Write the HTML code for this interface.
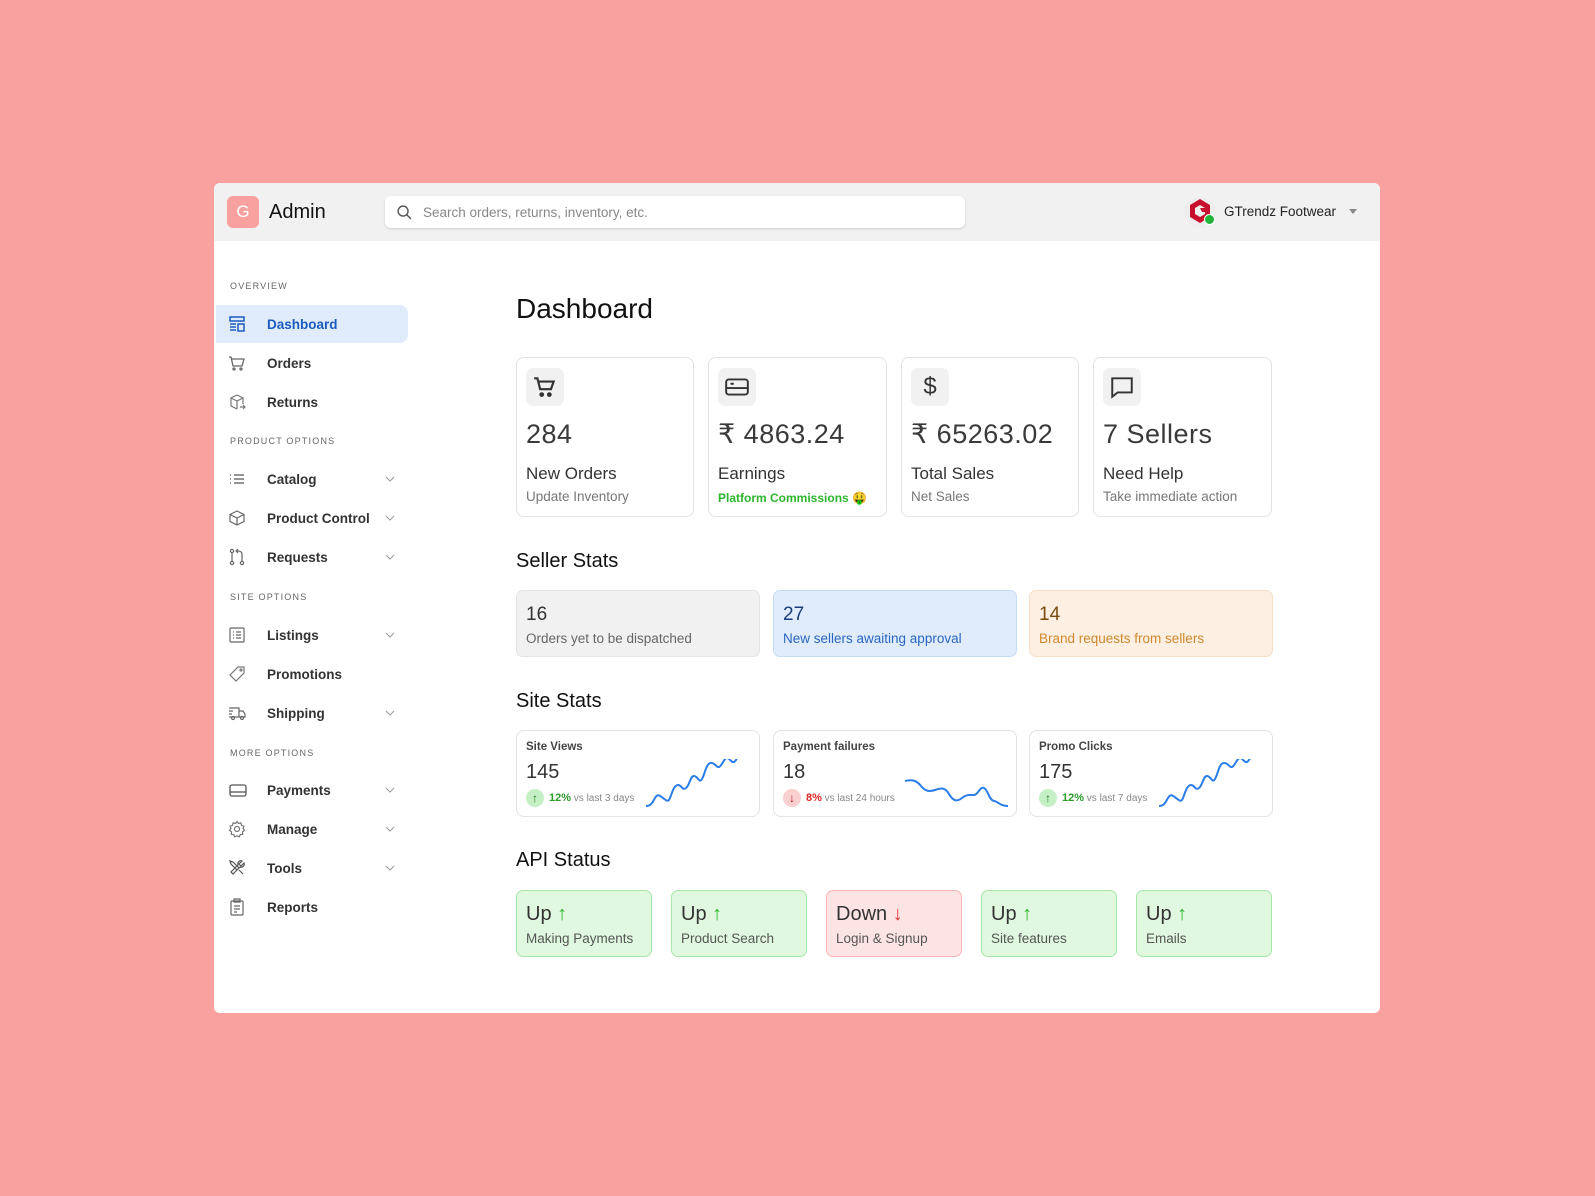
<!DOCTYPE html>
<html><head><meta charset="utf-8">
<style>
*{box-sizing:border-box;margin:0;padding:0}
body{width:1595px;height:1196px;background:#f9a19e;font-family:"Liberation Sans",sans-serif;position:relative;overflow:hidden;color:#333}
.a{position:absolute}
#win{left:214px;top:183px;width:1166px;height:830px;background:#fff;border-radius:6px;overflow:hidden}
#hdr{left:0;top:0;width:1166px;height:58px;background:#f1f1f1}
.lbl{font-size:9px;letter-spacing:1.2px;color:#666;left:16px}
.it{left:2px;width:190px;height:38px;display:flex;align-items:center;font-size:13.5px;font-weight:bold;color:#333}
.it svg{position:absolute;left:12px;width:18px;height:18px}
.it span{position:absolute;left:51px}
.it .ch{position:absolute;left:168px;width:12px;height:12px}
.card{border:1px solid #e3e3e3;border-radius:8px;background:#fff}
.ib{left:9px;top:10px;width:38px;height:38px;border-radius:7px;background:#f1f1f1;display:flex;align-items:center;justify-content:center}
.num{left:9px;top:61px;font-size:27px;color:#3a3a3a;letter-spacing:.5px}
.t1{left:9px;top:106px;font-size:17px;color:#333}
.t2{left:9px;top:131px;font-size:13.5px;color:#777}
h2{position:absolute;font-size:20px;font-weight:normal;color:#111}
.sb{border-radius:7px;height:67px;width:244px;top:407px}
.sb .n{position:absolute;left:9px;top:13px;font-size:19px}
.sb .d{position:absolute;left:9px;top:40px;font-size:13.5px}
.ss{top:547px;width:244px;height:87px}
.ss .h{position:absolute;left:9px;top:10px;font-size:11.5px;font-weight:bold;color:#444}
.ss .n{position:absolute;left:9px;top:30px;font-size:20px;color:#333}
.ss .c{position:absolute;left:9px;top:58px;width:18px;height:18px;border-radius:50%;display:flex;align-items:center;justify-content:center;font-size:12px}
.ss .p{position:absolute;left:32px;top:61px;font-size:10px;color:#888;white-space:nowrap}
.ss svg{position:absolute}
.ap{top:707px;width:136px;height:67px;border-radius:7px;border:1px solid #a8e6a8;background:#e0f8e0}
.ap .n{position:absolute;left:9px;top:12px;font-size:20px;color:#333}
.ap .n b{font-weight:normal;color:#2db52d}
.ap .d{position:absolute;left:9px;top:40px;font-size:13.5px;color:#555}
</style></head><body>
<div id="win" class="a">
 <div id="hdr" class="a">
  <div class="a" style="left:13px;top:13px;width:32px;height:32px;border-radius:6px;background:#f9a19e;color:#fff;font-size:17px;display:flex;align-items:center;justify-content:center">G</div>
  <div class="a" style="left:55px;top:18px;font-size:20px;color:#111">Admin</div>
  <div class="a" style="left:171px;top:13px;width:580px;height:32px;background:#fff;border-radius:6px;box-shadow:0 1px 2px rgba(0,0,0,.15)">
   <svg class="a" style="left:11px;top:8px" width="17" height="17" viewBox="0 0 24 24" fill="none" stroke="#555" stroke-width="2"><circle cx="10" cy="10" r="7"/><path d="M15 15l6 6"/></svg>
   <div class="a" style="left:38px;top:9px;font-size:13.5px;color:#888">Search orders, returns, inventory, etc.</div>
  </div>
  <div class="a" style="left:970px;top:13px;width:32px;height:32px;border-radius:50%;background:#eee"></div>
  <svg class="a" style="left:974px;top:15px" width="24" height="26" viewBox="0 0 24 26"><path d="M12 1L22 7v12l-10 6L2 19V7z" fill="#c8102e"/><path d="M12 7l5 3v6l-5 3-5-3v-6z" fill="#eee"/><path d="M12 10h5v4h-3" fill="#c8102e"/></svg>
  <div class="a" style="left:990px;top:31px;width:11px;height:11px;border-radius:50%;background:#22b33a;border:1.5px solid #fff"></div>
  <div class="a" style="left:1010px;top:21px;font-size:13.5px;color:#222">GTrendz Footwear</div>
  <div class="a" style="left:1135px;top:26px;border-left:4px solid transparent;border-right:4px solid transparent;border-top:5px solid #888"></div>
 </div>

 <div class="a lbl" style="top:98px">OVERVIEW</div>
 <div class="a" style="left:2px;top:122px;width:192px;height:38px;background:#e0ecfc;border-radius:0 8px 8px 0"></div>
 <div class="a it" style="top:122px;color:#1c5bbf"><svg viewBox="0 0 18 18" fill="none" stroke="#1c5bbf" stroke-width="1.5"><path d="M2 2h14v4H2zM2 9h6M2 12h6M2 15h6M10 9h6v7h-6z"/></svg><span>Dashboard</span></div>
 <div class="a it" style="top:161px"><svg viewBox="0 0 18 18" fill="none" stroke="#666" stroke-width="1.3"><path d="M1 3h2l2 9h9l2-7H4"/><circle cx="6" cy="15" r="1"/><circle cx="13" cy="15" r="1"/></svg><span>Orders</span></div>
 <div class="a it" style="top:200px"><svg viewBox="0 0 18 18" fill="none" stroke="#777" stroke-width="1.2"><path d="M9 2l6 3v6M9 2L3 5v8l6 3M3 5l6 3 6-3M9 8v8M12 14h5M15 12l2 2-2 2"/></svg><span>Returns</span></div>
 <div class="a lbl" style="top:253px">PRODUCT OPTIONS</div>
 <div class="a it" style="top:277px"><svg viewBox="0 0 18 18" fill="none" stroke="#555" stroke-width="1.3"><path d="M2 5h1M2 9h1M2 13h1M6 5h10M6 9h10M6 13h10"/></svg><span>Catalog</span><svg class="ch" viewBox="0 0 12 12" fill="none" stroke="#999"><path d="M2 4l4 4 4-4"/></svg></div>
 <div class="a it" style="top:316px"><svg viewBox="0 0 18 18" fill="none" stroke="#666" stroke-width="1.2"><path d="M9 2l7 3.5v7L9 16l-7-3.5v-7zM2 5.5L9 9l7-3.5M9 9v7"/></svg><span>Product Control</span><svg class="ch" viewBox="0 0 12 12" fill="none" stroke="#999"><path d="M2 4l4 4 4-4"/></svg></div>
 <div class="a it" style="top:355px"><svg viewBox="0 0 18 18" fill="none" stroke="#666" stroke-width="1.2"><circle cx="4" cy="3" r="1.6"/><circle cx="4" cy="15" r="1.6"/><circle cx="14" cy="15" r="1.6"/><path d="M4 5v8M14 13V6c0-2-2-3-4-3h-1M10 1l-2 2 2 2"/></svg><span>Requests</span><svg class="ch" viewBox="0 0 12 12" fill="none" stroke="#999"><path d="M2 4l4 4 4-4"/></svg></div>
 <div class="a lbl" style="top:409px">SITE OPTIONS</div>
 <div class="a it" style="top:433px"><svg viewBox="0 0 18 18" fill="none" stroke="#666" stroke-width="1.2"><rect x="2" y="2" width="14" height="14" rx="1"/><path d="M5 6h1M5 9h1M5 12h1M8 6h5M8 9h5M8 12h5"/></svg><span>Listings</span><svg class="ch" viewBox="0 0 12 12" fill="none" stroke="#999"><path d="M2 4l4 4 4-4"/></svg></div>
 <div class="a it" style="top:472px"><svg viewBox="0 0 18 18" fill="none" stroke="#777" stroke-width="1.2"><path d="M10 2h6v6l-8 8-6-6z"/><circle cx="13" cy="5" r="1"/></svg><span>Promotions</span></div>
 <div class="a it" style="top:511px"><svg viewBox="0 0 18 18" fill="none" stroke="#666" stroke-width="1.2"><path d="M1 4h10v9H1M11 7h4l2 3v3h-6M1 7h4M1 10h3"/><circle cx="5" cy="14" r="1.5"/><circle cx="14" cy="14" r="1.5"/></svg><span>Shipping</span><svg class="ch" viewBox="0 0 12 12" fill="none" stroke="#999"><path d="M2 4l4 4 4-4"/></svg></div>
 <div class="a lbl" style="top:565px">MORE OPTIONS</div>
 <div class="a it" style="top:588px"><svg viewBox="0 0 18 18" fill="none" stroke="#555" stroke-width="1.3" style="width:20px"><rect x="1" y="4" width="16" height="11" rx="2"/><path d="M1 11h16"/></svg><span>Payments</span><svg class="ch" viewBox="0 0 12 12" fill="none" stroke="#999"><path d="M2 4l4 4 4-4"/></svg></div>
 <div class="a it" style="top:627px"><svg viewBox="0 0 18 18" fill="none" stroke="#777" stroke-width="1.2"><circle cx="9" cy="9" r="2.5"/><path d="M9 1.5l1.5 2 2.4-.6.6 2.4 2.4.9-.9 2.3 1.5 1.9-2 1.5.2 2.4-2.4.2-1 2.3-2.3-1-2.3 1-1-2.3-2.4-.2.2-2.4-2-1.5 1.5-1.9-.9-2.3 2.4-.9.6-2.4 2.4.6z"/></svg><span>Manage</span><svg class="ch" viewBox="0 0 12 12" fill="none" stroke="#999"><path d="M2 4l4 4 4-4"/></svg></div>
 <div class="a it" style="top:666px"><svg viewBox="0 0 18 18" fill="none" stroke="#555" stroke-width="1.2"><path d="M2 2l3 1 6 6-2 2-6-6zM16 4l-3 3-2-2 3-3c-2-1-5 1-4 4L3 13l2 2 7-7c3 1 5-2 4-4zM11 11l4 4"/></svg><span>Tools</span><svg class="ch" viewBox="0 0 12 12" fill="none" stroke="#999"><path d="M2 4l4 4 4-4"/></svg></div>
 <div class="a it" style="top:705px"><svg viewBox="0 0 18 18" fill="none" stroke="#666" stroke-width="1.2"><rect x="3" y="3" width="12" height="14" rx="1"/><path d="M6 1h6v3H6zM6 8h6M6 11h6M6 14h3"/></svg><span>Reports</span></div>

 <div class="a" style="left:302px;top:110px;font-size:28px;color:#111">Dashboard</div>

 <div class="a card" style="left:302px;top:174px;width:178px;height:160px">
  <div class="a ib"><svg width="26" height="26" viewBox="0 0 24 24" fill="none" stroke="#333" stroke-width="2"><path d="M2 4h3l2.5 10h10L20 7H6"/><circle cx="9" cy="19" r="1.2" fill="#333"/><circle cx="16" cy="19" r="1.2" fill="#333"/></svg></div>
  <div class="a num">284</div><div class="a t1">New Orders</div><div class="a t2">Update Inventory</div>
 </div>
 <div class="a card" style="left:494px;top:174px;width:179px;height:160px">
  <div class="a ib"><svg width="28" height="26" viewBox="0 0 24 24" fill="none" stroke="#333" stroke-width="1.8"><rect x="2" y="5" width="20" height="14" rx="2.5"/><path d="M2 13h20M6 9h3"/></svg></div>
  <div class="a num">₹ 4863.24</div><div class="a t1">Earnings</div><div class="a t2" style="color:#2db52d;font-weight:bold;font-size:12px;top:133px">Platform Commissions 🤑</div>
 </div>
 <div class="a card" style="left:687px;top:174px;width:178px;height:160px">
  <div class="a ib" style="font-size:24px;color:#333">$</div>
  <div class="a num">₹ 65263.02</div><div class="a t1">Total Sales</div><div class="a t2">Net Sales</div>
 </div>
 <div class="a card" style="left:879px;top:174px;width:179px;height:160px">
  <div class="a ib"><svg width="26" height="26" viewBox="0 0 24 24" fill="none" stroke="#333" stroke-width="1.8"><path d="M3 4h18v13H8l-5 4z"/></svg></div>
  <div class="a num">7 Sellers</div><div class="a t1">Need Help</div><div class="a t2">Take immediate action</div>
 </div>

 <h2 style="left:302px;top:367px">Seller Stats</h2>
 <div class="a sb" style="left:302px;background:#f1f1f1;border:1px solid #e3e3e3"><div class="n" style="color:#333">16</div><div class="d" style="color:#666">Orders yet to be dispatched</div></div>
 <div class="a sb" style="left:559px;background:#e0ecfc;border:1px solid #c4dbf8"><div class="n" style="color:#1a3d7a">27</div><div class="d" style="color:#2a66c4">New sellers awaiting approval</div></div>
 <div class="a sb" style="left:815px;background:#fdf0e2;border:1px solid #f8e0c5"><div class="n" style="color:#7a4a12">14</div><div class="d" style="color:#d0882d">Brand requests from sellers</div></div>

 <h2 style="left:302px;top:507px">Site Stats</h2>
 <div class="a card ss" style="left:302px"><div class="h">Site Views</div><div class="n">145</div><div class="c" style="background:#c5f0c5;color:#1d7a1d">↑</div><div class="p"><b style="color:#2a9d2a;font-size:11px">12%</b> vs last 3 days</div>
  <svg style="left:128px;top:28px" width="108" height="50" viewBox="0 0 108 50"><path d="M1 47c5 0 6-3 9-8s5-2 8 0 5 5 7 0 4-13 8-13 4 6 8 3 4-12 8-12 5 8 8 3 4-16 9-16 5 5 8 4 5-9 8-9 4 5 7 4 4-10 8-6" fill="none" stroke="#2b7de9" stroke-width="2"/></svg></div>
 <div class="a card ss" style="left:559px"><div class="h">Payment failures</div><div class="n">18</div><div class="c" style="background:#f9cfcf;color:#b31b1b">↓</div><div class="p"><b style="color:#e02424;font-size:11px">8%</b> vs last 24 hours</div>
  <svg style="left:130px;top:44px" width="105" height="35" viewBox="0 0 105 35"><path d="M1 6c8-2 12 0 16 5s8 6 14 4 10-3 14 4 8 8 13 4 8-3 12-3 6-9 10-7 5 12 10 13 6 5 14 5" fill="none" stroke="#2b7de9" stroke-width="2"/></svg></div>
 <div class="a card ss" style="left:815px"><div class="h">Promo Clicks</div><div class="n">175</div><div class="c" style="background:#c5f0c5;color:#1d7a1d">↑</div><div class="p"><b style="color:#2a9d2a;font-size:11px">12%</b> vs last 7 days</div>
  <svg style="left:128px;top:28px" width="108" height="50" viewBox="0 0 108 50"><path d="M1 47c5 0 6-3 9-8s5-2 8 0 5 5 7 0 4-13 8-13 4 6 8 3 4-12 8-12 5 8 8 3 4-16 9-16 5 5 8 4 5-9 8-9 4 5 7 4 4-10 8-6" fill="none" stroke="#2b7de9" stroke-width="2"/></svg></div>

 <h2 style="left:302px;top:666px">API Status</h2>
 <div class="a ap" style="left:302px"><div class="n">Up <b>↑</b></div><div class="d">Making Payments</div></div>
 <div class="a ap" style="left:457px"><div class="n">Up <b>↑</b></div><div class="d">Product Search</div></div>
 <div class="a ap" style="left:612px;background:#fde4e4;border-color:#f7b5b5"><div class="n">Down <b style="color:#e53535">↓</b></div><div class="d">Login &amp; Signup</div></div>
 <div class="a ap" style="left:767px"><div class="n">Up <b>↑</b></div><div class="d">Site features</div></div>
 <div class="a ap" style="left:922px"><div class="n">Up <b>↑</b></div><div class="d">Emails</div></div>
</div>
</body></html>
